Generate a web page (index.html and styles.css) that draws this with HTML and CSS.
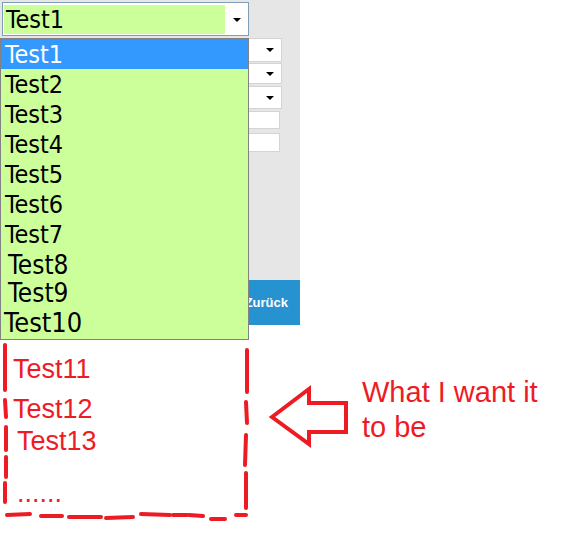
FILE: index.html
```html
<!DOCTYPE html>
<html lang="de">
<head>
<meta charset="utf-8">
<title>Dropdown</title>
<link rel="stylesheet" href="styles.css">
</head>
<body>
<div class="page">
  <div class="app">
    <div class="panel">
      <div class="combo">
        <div class="combo-value">Test1</div>
        <span class="caret"></span>
      </div>
      <div class="fields">
        <div class="field field-select f1"><span class="caret"></span></div>
        <div class="field field-select f2"><span class="caret"></span></div>
        <div class="field field-select f3"><span class="caret"></span></div>
        <div class="field field-input f4"></div>
        <div class="field field-input f5"></div>
      </div>
    </div>
    <div class="back">Zurück</div>
    <ul class="list">
      <li class="item item-active">Test1</li>
      <li class="item">Test2</li>
      <li class="item">Test3</li>
      <li class="item">Test4</li>
      <li class="item">Test5</li>
      <li class="item">Test6</li>
      <li class="item">Test7</li>
      <li class="item item-8">Test8</li>
      <li class="item item-9">Test9</li>
      <li class="item item-10">Test10</li>
    </ul>
  </div>
  <div class="annotation">
    <svg class="sketch" width="582" height="213" viewBox="0 0 582 213">
      <g class="dash">
        <line x1="5" y1="5" x2="5" y2="50"/>
        <line x1="5" y1="60" x2="6" y2="77"/>
        <line x1="6" y1="87" x2="6" y2="110"/>
        <line x1="6" y1="117" x2="6" y2="137"/>
        <line x1="5" y1="143" x2="5" y2="162"/>
        <line x1="7" y1="175" x2="30" y2="174"/>
        <line x1="41" y1="176" x2="62" y2="176"/>
        <line x1="69" y1="177" x2="101" y2="177"/>
        <line x1="106" y1="178" x2="133" y2="177"/>
        <line x1="141" y1="174" x2="170" y2="175"/>
        <line x1="173" y1="175" x2="187" y2="175"/>
        <line x1="189" y1="175" x2="203" y2="176"/>
        <line x1="211" y1="179" x2="225" y2="179"/>
        <line x1="236" y1="175" x2="246" y2="175"/>
        <line x1="247" y1="10" x2="247" y2="52"/>
        <line x1="246" y1="62" x2="247" y2="83"/>
        <line x1="246" y1="95" x2="245" y2="125"/>
        <line x1="246" y1="133" x2="246" y2="168"/>
      </g>
      <polygon class="arrow" points="272,77 309,49 309,63 346,63 346,92 309,92 309,104"/>
    </svg>
    <div class="wish">
      <div class="wish-line w11">Test11</div>
      <div class="wish-line w12">Test12</div>
      <div class="wish-line w13">Test13</div>
      <div class="wish-line wdots">......</div>
    </div>
    <div class="note">What I want it<br>to be</div>
  </div>
</div>
</body>
</html>
```

FILE: styles.css
```css
html, body {
  margin: 0;
  padding: 0;
  background: #ffffff;
}

.page {
  width: 582px;
  height: 553px;
  overflow: hidden;
  font-family: "DejaVu Sans", "Liberation Sans", sans-serif;
}

.app {
  position: relative;
  width: 300px;
}

.panel {
  height: 280px;
  box-sizing: border-box;
  padding: 2px 0 0 2px;
  background: #e6e6e6;
}

.combo {
  width: 247px;
  height: 34px;
  box-sizing: border-box;
  border: 1px solid #7f9db9;
  background: #ffffff;
  display: flex;
  align-items: flex-start;
}

.combo-value {
  width: 221px;
  height: 29px;
  margin: 2px 0 0 1px;
  padding-left: 2px;
  box-sizing: border-box;
  background: #ccff99;
  color: #000000;
  font-size: 25px;
  font-stretch: condensed;
  line-height: 30px;
}

.caret {
  width: 0;
  height: 0;
  border-left: 4px solid transparent;
  border-right: 4px solid transparent;
  border-top: 4px solid #000000;
}

.combo .caret {
  margin: 15px 0 0 8px;
}

.fields {
  display: flex;
  flex-direction: column;
  margin-top: 2px;
}

.field {
  box-sizing: border-box;
  background: #ffffff;
  border: 1px solid #d4d4d4;
  display: flex;
  align-items: center;
  justify-content: flex-end;
}

.field-select {
  width: 280px;
  padding-right: 7px;
}

.field-input {
  width: 278px;
}

.f1 { height: 24px; }
.f2 { height: 21px; margin-top: 1px; }
.f3 { height: 23px; margin-top: 2px; }
.f4 { height: 18px; margin-top: 2px; }
.f5 { height: 19px; margin-top: 4px; }

.back {
  height: 45px;
  background: #2692d0;
  color: #ffffff;
  font-family: "Liberation Sans", Arial, sans-serif;
  font-weight: bold;
  font-size: 13px;
  line-height: 45px;
  text-align: right;
  padding-right: 12px;
}

.list {
  position: absolute;
  left: 0;
  top: 38px;
  width: 249px;
  height: 302px;
  box-sizing: border-box;
  margin: 0;
  padding: 0;
  list-style: none;
  background: #ccff99;
  border: 1px solid #828282;
  z-index: 2;
}

.item {
  height: 30px;
  line-height: 31px;
  padding-left: 4px;
  font-size: 25px;
  font-stretch: condensed;
  color: #000000;
}

.item-active {
  background: #3399ff;
  color: #ffffff;
  outline: 1px dotted #b9773a;
  outline-offset: -1px;
}

.item-8 {
  height: 32px;
  line-height: 33px;
  font-size: 26px;
  padding-left: 7px;
}

.item-9 {
  height: 24px;
  line-height: 25px;
  font-size: 26px;
  padding-left: 7px;
}

.item-10 {
  height: 34px;
  line-height: 35px;
  font-size: 27px;
  padding-left: 3px;
}

.annotation {
  position: relative;
  margin-top: 15px;
  height: 213px;
  display: flex;
  align-items: flex-start;
  color: #ed1c24;
  font-family: "Liberation Sans", Arial, sans-serif;
}

.sketch {
  position: absolute;
  left: 0;
  top: 0;
}

.dash line {
  stroke: #ed1c24;
  stroke-width: 4;
  stroke-linecap: round;
}

.arrow {
  fill: none;
  stroke: #ed1c24;
  stroke-width: 4;
  stroke-linejoin: miter;
}

.wish {
  width: 250px;
  padding-top: 14px;
  font-size: 27px;
}

.wish-line {
  height: 30px;
  line-height: 30px;
  padding-left: 13px;
}

.w12 { margin-top: 10px; }
.w13 { margin-top: 2px; padding-left: 17px; }
.wdots { margin-top: 22px; padding-left: 17px; }

.note {
  margin: 35px 0 0 112px;
  font-size: 29px;
  line-height: 35px;
}
```
